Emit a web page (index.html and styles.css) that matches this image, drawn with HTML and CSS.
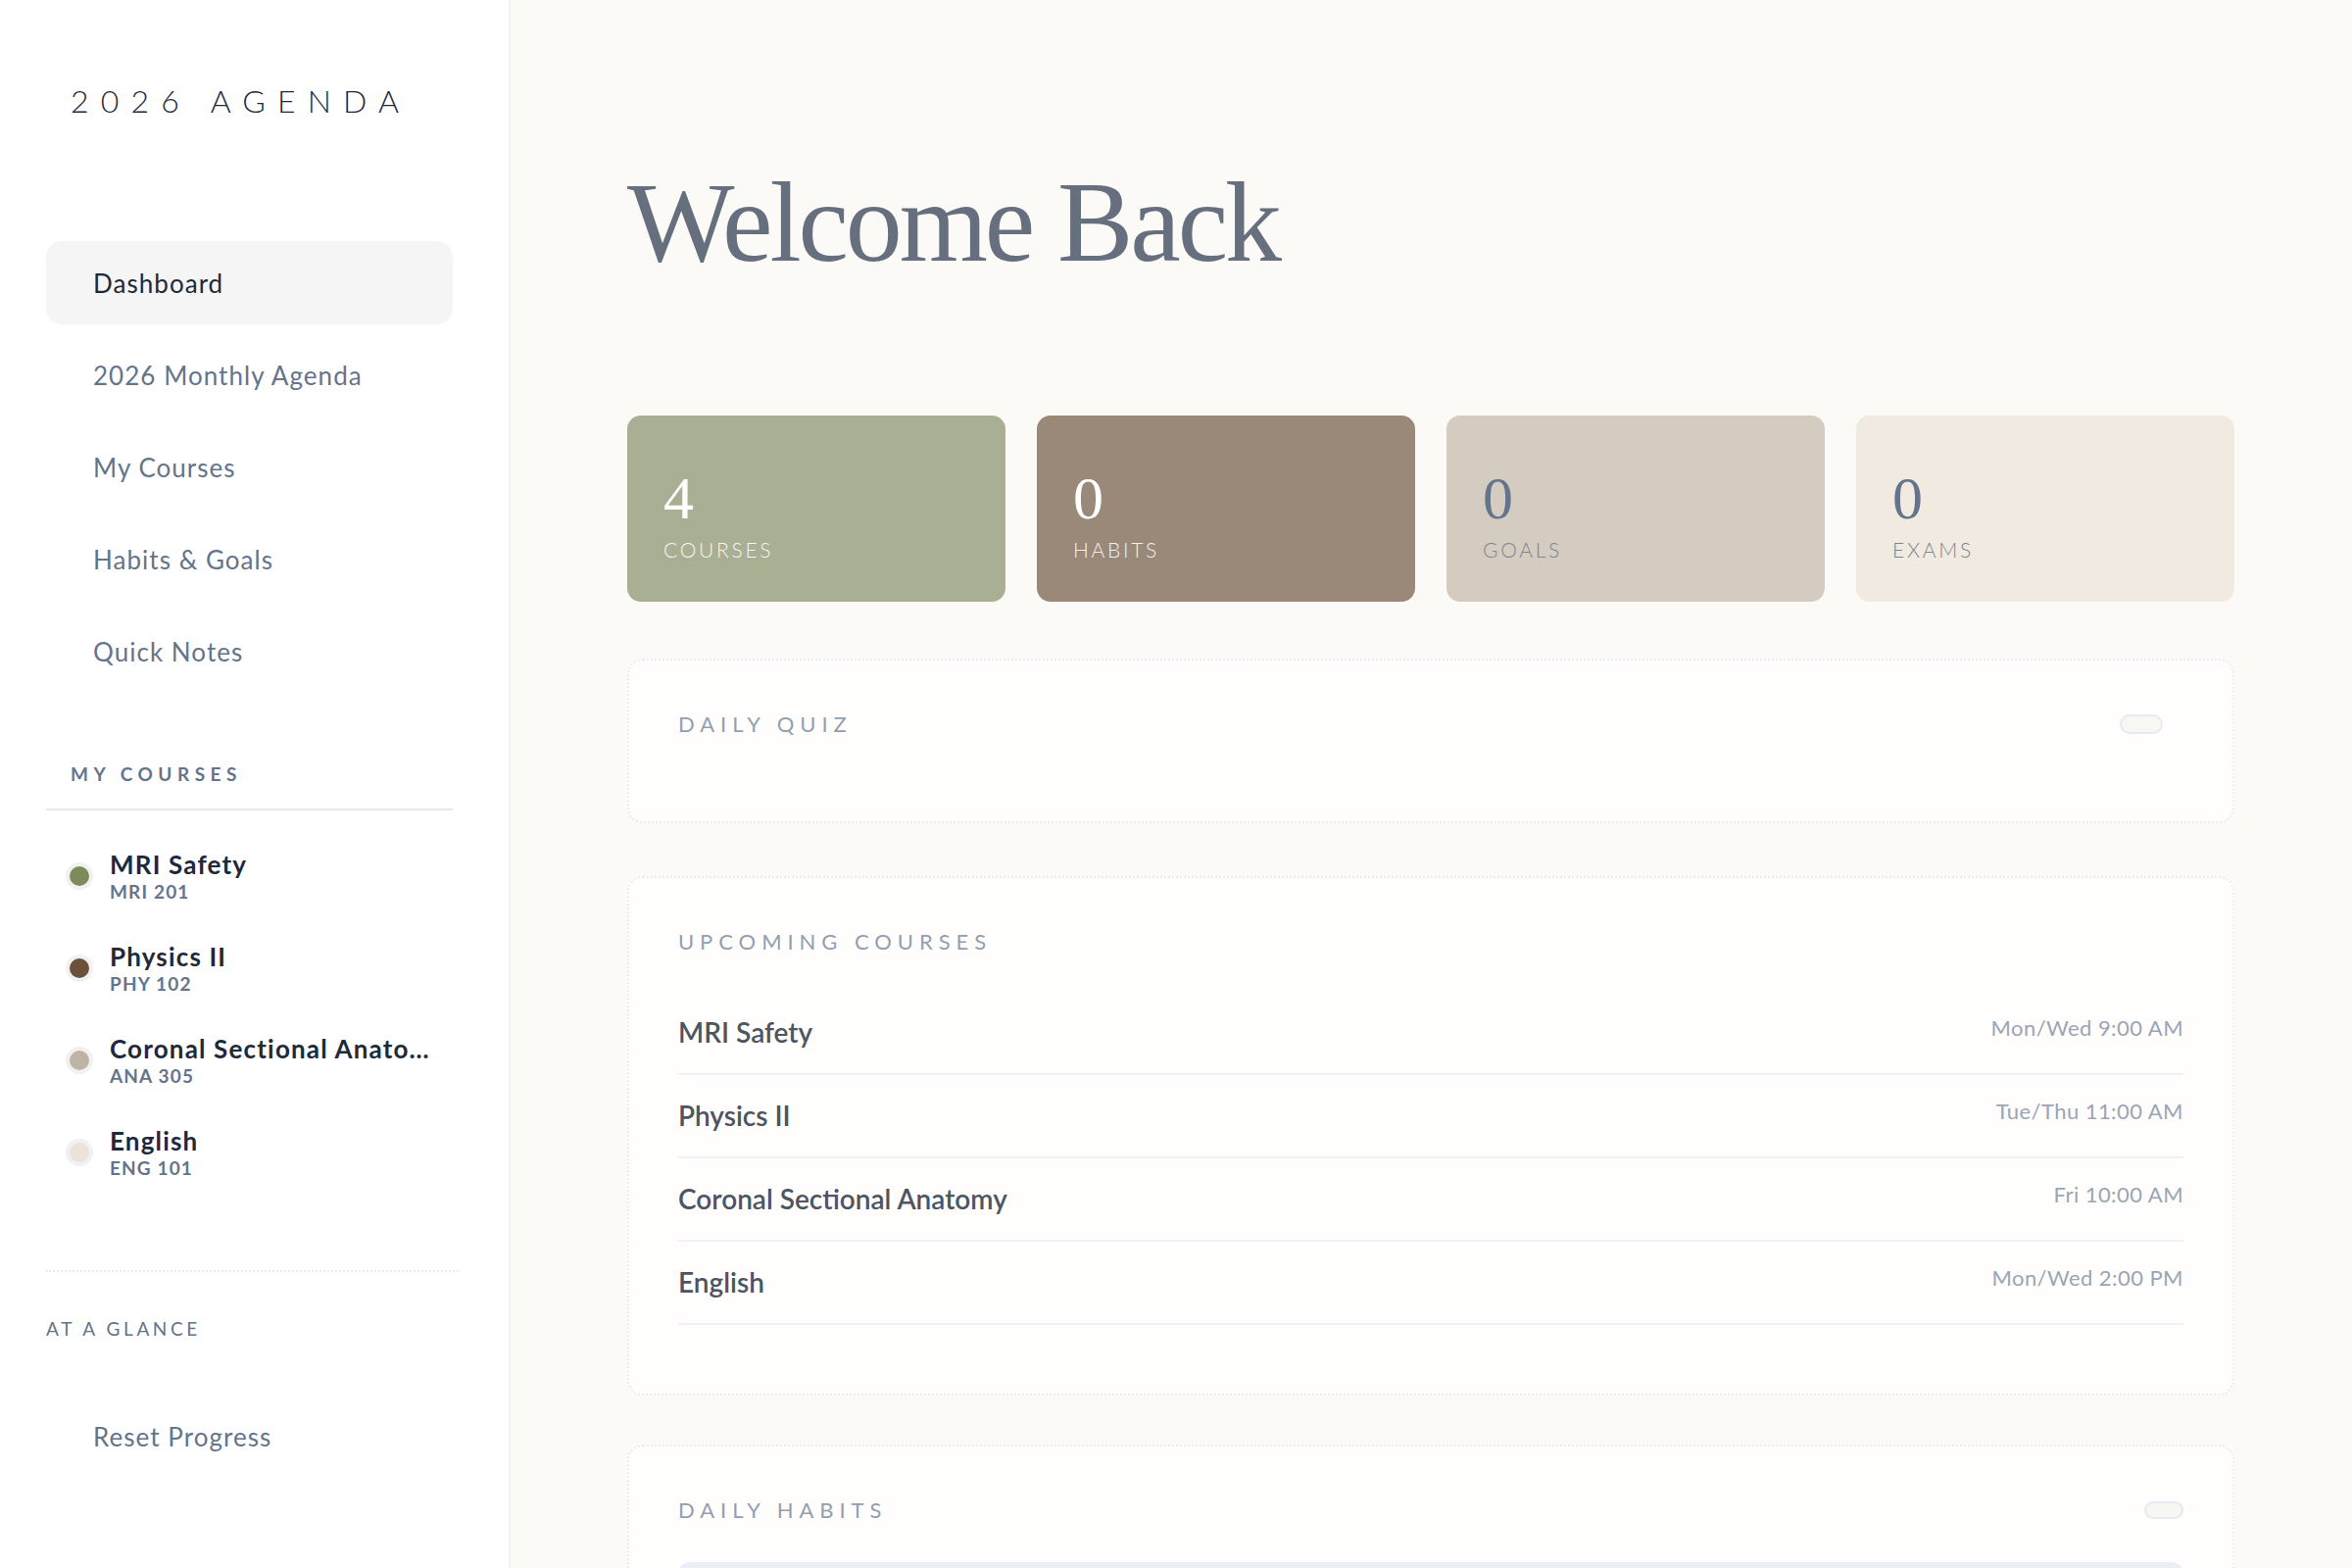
FILE: index.html
```html
<!DOCTYPE html>
<html lang="en">
<head>
    <meta charset="UTF-8">
    <meta name="viewport" content="width=device-width, initial-scale=1.0">
    <title>2026 Agenda</title>
    <link rel="stylesheet" href="styles.css">
</head>
<body>
    <div class="app">
        <aside class="sidebar">
            <div class="brand">2026 AGENDA</div>

            <nav class="nav">
                <a class="nav-item active" href="#">Dashboard</a>
                <a class="nav-item" href="#">2026 Monthly Agenda</a>
                <a class="nav-item" href="#">My Courses</a>
                <a class="nav-item" href="#">Habits &amp; Goals</a>
                <a class="nav-item" href="#">Quick Notes</a>
            </nav>

            <div class="side-heading">MY COURSES</div>
            <ul class="course-list">
                <li class="course-item">
                    <span class="dot dot-olive"></span>
                    <div class="course-text">
                        <div class="course-name">MRI Safety</div>
                        <div class="course-code">MRI 201</div>
                    </div>
                </li>
                <li class="course-item">
                    <span class="dot dot-brown"></span>
                    <div class="course-text">
                        <div class="course-name">Physics II</div>
                        <div class="course-code">PHY 102</div>
                    </div>
                </li>
                <li class="course-item">
                    <span class="dot dot-sand"></span>
                    <div class="course-text">
                        <div class="course-name" title="Coronal Sectional Anatomy">Coronal Sectional Anatomy</div>
                        <div class="course-code">ANA 305</div>
                    </div>
                </li>
                <li class="course-item">
                    <span class="dot dot-cream"></span>
                    <div class="course-text">
                        <div class="course-name">English</div>
                        <div class="course-code">ENG 101</div>
                    </div>
                </li>
            </ul>

            <div class="glance">
                <div class="glance-label">AT A GLANCE</div>
            </div>

            <a class="nav-item reset" href="#">Reset Progress</a>
        </aside>

        <main class="main">
            <h1 class="welcome">Welcome Back</h1>

            <div class="stats">
                <div class="stat stat-green">
                    <div class="stat-num">4</div>
                    <div class="stat-label">COURSES</div>
                </div>
                <div class="stat stat-brown">
                    <div class="stat-num">0</div>
                    <div class="stat-label">HABITS</div>
                </div>
                <div class="stat stat-sand">
                    <div class="stat-num">0</div>
                    <div class="stat-label">GOALS</div>
                </div>
                <div class="stat stat-cream">
                    <div class="stat-num">0</div>
                    <div class="stat-label">EXAMS</div>
                </div>
            </div>

            <section class="panel quiz">
                <div class="panel-head">
                    <h2 class="panel-title">DAILY QUIZ</h2>
                    <span class="toggle toggle-quiz"></span>
                </div>
            </section>

            <section class="panel">
                <div class="panel-head">
                    <h2 class="panel-title">UPCOMING COURSES</h2>
                </div>
                <ul class="upcoming">
                    <li class="up-row"><span class="up-name">MRI Safety</span><span class="up-time">Mon/Wed 9:00 AM</span></li>
                    <li class="up-row"><span class="up-name">Physics II</span><span class="up-time">Tue/Thu 11:00 AM</span></li>
                    <li class="up-row"><span class="up-name">Coronal Sectional Anatomy</span><span class="up-time">Fri 10:00 AM</span></li>
                    <li class="up-row"><span class="up-name">English</span><span class="up-time">Mon/Wed 2:00 PM</span></li>
                </ul>
            </section>

            <section class="panel habits">
                <div class="panel-head">
                    <h2 class="panel-title">DAILY HABITS</h2>
                    <span class="toggle"></span>
                </div>
                <div class="habit-bar"></div>
            </section>
        </main>
    </div>
</body>
</html>
```

FILE: styles.css
```css
body {
    margin: 0;
    font-family: Lato, "Noto Sans", sans-serif;
    background-color: #fbfaf7;
    color: #1e293b;
}

.app {
    display: flex;
    height: 100vh;
    overflow: hidden;
}

/* sidebar */

.sidebar {
    width: 521px;
    flex-shrink: 0;
    box-sizing: border-box;
    padding: 83px 57px 0 47px;
    background-color: #ffffff;
    border-right: 2px solid #eef0f3;
}

.brand {
    padding-left: 25px;
    font-size: 32px;
    line-height: 40px;
    font-weight: 300;
    letter-spacing: 0.38em;
    color: #1e293b;
}

.nav {
    margin-top: 123px;
    display: flex;
    flex-direction: column;
    gap: 9px;
}

.nav-item {
    display: flex;
    align-items: center;
    height: 85px;
    padding-left: 48px;
    border-radius: 16px;
    font-size: 26px;
    letter-spacing: 0.04em;
    color: #64748b;
    text-decoration: none;
}

.nav-item.active {
    background-color: #f5f5f5;
    color: #1e293b;
}

.side-heading {
    margin-top: 71px;
    padding: 0 0 23px 25px;
    font-size: 19px;
    line-height: 24px;
    font-weight: 700;
    letter-spacing: 0.29em;
    color: #64748b;
    border-bottom: 2px solid #e5e9f0;
}

.course-list {
    list-style: none;
    margin: 39px 0 0;
    padding: 0;
    display: flex;
    flex-direction: column;
    gap: 38px;
}

.course-item {
    display: flex;
    align-items: center;
    height: 56px;
    padding-left: 24px;
}

.dot {
    width: 20px;
    height: 20px;
    flex-shrink: 0;
    border-radius: 50%;
    box-shadow: 0 0 0 4px #f1f1f1;
    margin-right: 21px;
}

.dot-olive { background-color: #7d8b5b; }
.dot-brown { background-color: #6b513a; }
.dot-sand { background-color: #beb4a4; }
.dot-cream { background-color: #ebe3d9; }

.course-text {
    min-width: 0;
    max-width: 326px;
    flex: 1;
}

.course-name {
    font-size: 26px;
    line-height: 32px;
    font-weight: 700;
    letter-spacing: 0.045em;
    color: #1e293b;
    white-space: nowrap;
    overflow: hidden;
    text-overflow: ellipsis;
}

.course-code {
    font-size: 19px;
    line-height: 24px;
    font-weight: 700;
    letter-spacing: 0.06em;
    color: #64748b;
}

.glance {
    margin-top: 92px;
    padding-top: 46px;
    border-top: 2px dotted #e8eaee;
    margin-right: -6px;
}

.glance-label {
    font-size: 19px;
    line-height: 24px;
    letter-spacing: 0.19em;
    color: #64748b;
}

.nav-item.reset {
    margin-top: 55px;
}

/* main */

.main {
    flex: 1;
    padding: 164px 120px 0 119px;
    overflow: hidden;
}

.welcome {
    margin: 0;
    font-family: "Liberation Serif", "DejaVu Serif", serif;
    font-size: 116px;
    line-height: 1.1;
    font-weight: 400;
    letter-spacing: -0.027em;
    color: #666f7d;
}

.stats {
    margin-top: 132px;
    display: grid;
    grid-template-columns: repeat(4, 1fr);
    gap: 32px;
}

.stat {
    height: 190px;
    box-sizing: border-box;
    padding: 53px 37px 0;
    border-radius: 14px;
    color: #ffffff;
}

.stat-green { background-color: #a9af93; }
.stat-brown { background-color: #9a8878; }
.stat-sand { background-color: #d4ccc1; color: #64748b; }
.stat-cream { background-color: #f0eae1; color: #64748b; }

.stat-num {
    font-family: "Liberation Serif", "DejaVu Serif", serif;
    font-size: 62px;
    line-height: 1;
}

.stat-label {
    margin-top: 9px;
    font-size: 21px;
    line-height: 26px;
    font-weight: 300;
    letter-spacing: 0.13em;
    opacity: 0.88;
}

.stat-sand .stat-label,
.stat-cream .stat-label {
    color: #7f8590;
    opacity: 1;
}

.panel {
    margin-top: 54px;
    padding: 48px 50px 70px;
    background-color: #fffefc;
    border: 2px dotted #e8ebf1;
    border-radius: 16px;
}

.panel.quiz {
    margin-top: 58px;
    height: 168px;
    box-sizing: border-box;
    padding-bottom: 0;
}

.panel.habits {
    margin-top: 50px;
}

.panel-head {
    display: flex;
    align-items: center;
    justify-content: space-between;
    height: 34px;
}

.panel-title {
    margin: 0;
    font-size: 22px;
    line-height: 28px;
    font-weight: 400;
    letter-spacing: 0.27em;
    color: #939eb0;
}

.toggle {
    width: 36px;
    height: 14px;
    border: 2px solid #e6eaf1;
    border-radius: 999px;
    background-color: #f8f7f4;
}

.toggle-quiz {
    width: 40px;
    height: 16px;
    margin-right: 21px;
}

.upcoming {
    list-style: none;
    margin: 34px 0 0;
    padding: 0;
}

.up-row {
    display: flex;
    justify-content: space-between;
    align-items: flex-start;
    padding: 26px 0 27px;
    border-bottom: 2px solid #eef1f6;
}

.up-name {
    font-size: 28px;
    line-height: 30px;
    font-weight: 600;
    color: #4d5462;
}

.up-time {
    font-size: 22px;
    line-height: 22px;
    letter-spacing: 0.02em;
    color: #9aa5b5;
}

.habit-bar {
    margin-top: 36px;
    height: 60px;
    border-radius: 12px;
    background-color: #eceef5;
}
```
